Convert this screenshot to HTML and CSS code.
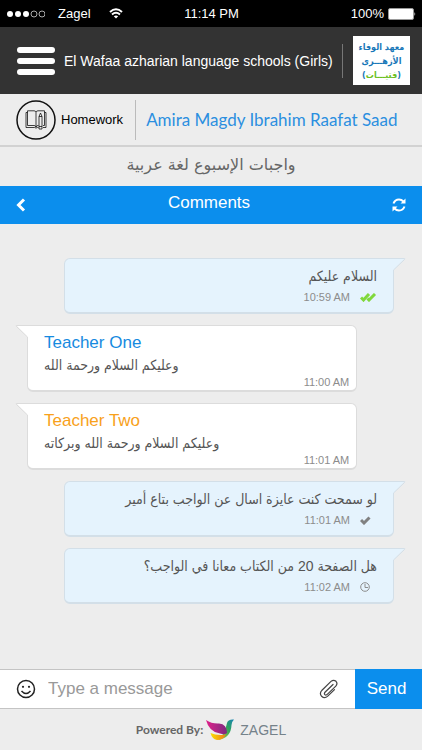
FILE: index.html
```html
<!DOCTYPE html>
<html lang="en">
<head>
  <meta charset="UTF-8" />
  <meta name="viewport" content="width=device-width, initial-scale=1.0"/>
  <title>Homework Comments</title>
  <link rel="stylesheet" href="styles.css">
</head>
<body>

<div class="status-bar">
  <div class="carrier">
    <svg class="signal" width="38" height="8" viewBox="0 0 38 8">
      <g fill="#fff"><circle cx="3" cy="4" r="3"/><circle cx="11" cy="4" r="3"/><circle cx="19" cy="4" r="3"/></g>
      <g fill="none" stroke="#aaa"><circle cx="27" cy="4" r="3"/><circle cx="35" cy="4" r="3"/></g>
    </svg>
    <span>Zagel</span>
    <svg class="wifi" width="14" height="11" viewBox="0 0 14 11" fill="none" stroke="#fff" stroke-width="2">
      <path d="M1 4 Q7 -1.5 13 4"/>
      <path d="M3 6.5 Q7 3 11 6.5"/>
      <path d="M7 10.5 L4.8 8.3 Q7 6.5 9.2 8.3 Z" fill="#fff" stroke="none"/>
    </svg>
  </div>
  <span>11:14 PM</span>
  <div class="battery">
    <span>100%</span>
    <svg width="28" height="12" viewBox="0 0 28 12">
      <rect x="0.5" y="0.5" width="25" height="11" rx="1.5" fill="#fff" stroke="#999"/>
      <path d="M26.5 4 Q28 6 26.5 8 Z" fill="#fff"/>
    </svg>
  </div>
</div>

<header class="header">
  <button class="menu-btn" type="button" aria-label="Menu">
    <span></span><span></span><span></span>
  </button>
  <h1>El Wafaa azharian language schools (Girls)</h1>
  <div class="school-logo" lang="ar" dir="rtl">
    <span>معهد الوفاء</span>
    <span>الأزهـــرى</span>
    <span>(<b>فتيـــات</b>)</span>
  </div>
</header>

<div class="student">
  <div class="section">
    <svg width="40" height="40" viewBox="0 0 40 40" fill="none" stroke="#111">
      <circle cx="20" cy="20" r="19" stroke-width="1.5"/>
      <g stroke-width="0.8">
        <path d="M20 12Q19.500 10.800 18 10.800H11.500V25.500H18Q19.500 25.500 20 27Q20.500 25.500 22 25.500H22.500M20 12Q20.500 10.800 22 10.800H28.500V25.500H27M20 12V27"/>
        <path d="M11.500 12.500H10V27.500H18.500Q20 27.500 20 28.300Q20 27.500 21.500 27.500H22.500M28.500 12.500H30V27.500H27"/>
        <path d="M23 16.500L24.500 13 26 16.500V29H23zM23 16.500H26M23 26.500H26" fill="#ededed"/>
      </g>
    </svg>
    <span>Homework</span>
  </div>
  <a class="student-name" href="#">Amira Magdy Ibrahim Raafat Saad</a>
</div>

<h2 class="subject" lang="ar" dir="rtl">واجبات الإسبوع لغة عربية</h2>

<div class="comments-bar">
  <button type="button" aria-label="Back">
    <svg width="10" height="14" viewBox="0 0 10 14" fill="none" stroke="#fff" stroke-width="3"><path d="M8 1.500L2.500 7 8 12.500"/></svg>
  </button>
  <h2>Comments</h2>
  <button type="button" aria-label="Refresh">
    <svg width="14" height="14" viewBox="0 0 14 14" fill="none" stroke="#fff" stroke-width="2">
      <path d="M1.500 5.500Q3 1.500 7 1.500 9.500 1.500 11.500 3.500 M12.500 8.500Q11 12.500 7 12.500 4.500 12.500 2.500 10.500"/>
      <path d="M13.500 0.500v5h-5z M0.500 13.500v-5h5z" fill="#fff" stroke="none"/>
    </svg>
  </button>
</div>

<main class="chat">
  <div class="message sent">
    <svg class="tail" width="14" height="14" viewBox="0 0 14 14"><path d="M0 0.500H12.500L1.500 12V14H0z" class="tail-fill"/><path d="M0 0.500H12.500Q13.500 0.500 12.500 1.500L1.500 12V14" class="tail-line"/></svg>
    <p lang="ar" dir="rtl">السلام عليكم</p>
    <div class="meta">
      <time>10:59 AM</time>
      <svg width="17" height="9" viewBox="0 0 17 9" fill="none" stroke="#80d83c" stroke-width="3"><path d="M1 4.500L3.500 7 9 1 M7.500 5.500L9 7 15 1"/></svg>
    </div>
  </div>

  <div class="message received">
    <svg class="tail" width="14" height="14" viewBox="0 0 14 14"><path d="M14 0.500H1.500L12.500 12V14H14z" class="tail-fill"/><path d="M14 0.500H1.500Q0.500 0.500 1.500 1.500L12.500 12V14" class="tail-line"/></svg>
    <h3 class="teacher-one">Teacher One</h3>
    <p lang="ar" dir="rtl">وعليكم السلام ورحمة الله</p>
    <time>11:00 AM</time>
  </div>

  <div class="message received">
    <svg class="tail" width="14" height="14" viewBox="0 0 14 14"><path d="M14 0.500H1.500L12.500 12V14H14z" class="tail-fill"/><path d="M14 0.500H1.500Q0.500 0.500 1.500 1.500L12.500 12V14" class="tail-line"/></svg>
    <h3 class="teacher-two">Teacher Two</h3>
    <p lang="ar" dir="rtl">وعليكم السلام ورحمة الله وبركاته</p>
    <time>11:01 AM</time>
  </div>

  <div class="message sent">
    <svg class="tail" width="14" height="14" viewBox="0 0 14 14"><path d="M0 0.500H12.500L1.500 12V14H0z" class="tail-fill"/><path d="M0 0.500H12.500Q13.500 0.500 12.500 1.500L1.500 12V14" class="tail-line"/></svg>
    <p lang="ar" dir="rtl">لو سمحت كنت عايزة اسال عن الواجب بتاع أمير</p>
    <div class="meta">
      <time>11:01 AM</time>
      <svg width="17" height="9" viewBox="0 0 17 9" fill="none" stroke="#808080" stroke-width="3"><path d="M1 4L4 7 9.500 1.500"/></svg>
    </div>
  </div>

  <div class="message sent">
    <svg class="tail" width="14" height="14" viewBox="0 0 14 14"><path d="M0 0.500H12.500L1.500 12V14H0z" class="tail-fill"/><path d="M0 0.500H12.500Q13.500 0.500 12.500 1.500L1.500 12V14" class="tail-line"/></svg>
    <p lang="ar" dir="rtl">هل الصفحة 20 من الكتاب معانا في الواجب؟</p>
    <div class="meta">
      <time>11:02 AM</time>
      <svg width="17" height="10" viewBox="0 0 17 10" fill="none" stroke="#8c8c8c"><circle cx="5" cy="5" r="4.300"/><path d="M5 2v3.500h3"/></svg>
    </div>
  </div>
</main>

<form class="compose">
  <button class="icon-btn" type="button" aria-label="Emoji">
    <svg width="20" height="20" viewBox="0 0 20 20" fill="none" stroke="#222" stroke-width="1.500">
      <circle cx="10" cy="10" r="8.500"/>
      <path d="M5.500 12Q10 17 14.500 12"/>
      <circle cx="7" cy="7.800" r="1.100" fill="#222" stroke="none"/><circle cx="13" cy="7.800" r="1.100" fill="#222" stroke="none"/>
    </svg>
  </button>
  <input type="text" name="message" placeholder="Type a message" aria-label="Type a message">
  <button class="icon-btn" type="button" aria-label="Attach file">
    <svg width="20" height="20" viewBox="0 0 20 20" fill="none" stroke="#444" stroke-width="1.200" stroke-linecap="round">
      <path d="M14 5.500L6 13.200Q4.800 15 6 15.800 7.200 16.500 8.500 15.200L16.800 7.200Q19 4.500 17 2.300 14.600 0.200 12 2.400L3 11.200Q0 14.500 2.600 17.300 5.500 20 8.500 17.400L15.500 10.600"/>
    </svg>
  </button>
  <button class="send-btn" type="submit">Send</button>
</form>

<footer class="footer">
  <span>Powered By:</span>
  <svg width="28" height="22" viewBox="0 0 28 22">
    <defs>
      <linearGradient id="wing"><stop offset="0" stop-color="#e0218a"/><stop offset="1" stop-color="#7d2a80"/></linearGradient>
      <linearGradient id="belly"><stop offset="0" stop-color="#fbe000"/><stop offset="1" stop-color="#f07a1c"/></linearGradient>
      <linearGradient id="body" x1="0" y1="1" x2="1" y2="0"><stop offset="0" stop-color="#b5d334"/><stop offset="0.6" stop-color="#2fa35c"/><stop offset="1" stop-color="#1583b8"/></linearGradient>
    </defs>
    <path d="M21 4Q22 0 28 0.500 25.500 3 25.500 6 25 19 12 21 19 15 21 4z" fill="url(#body)"/>
    <path d="M0 1Q6 5 13 4.500 21 5 21 14 19 16 14 14.500 3 13 0 1z" fill="url(#wing)"/>
    <path d="M4.500 14Q11 17 20 15.500 17 21 11 21 6 20 4.500 14z" fill="url(#belly)"/>
  </svg>
  <span class="brand">ZAGEL</span>
</footer>

</body>
</html>
```
FILE: styles.css
```css
* {
  box-sizing: border-box;
}

body {
  margin: 0;
  min-height: 100vh;
  display: flex;
  flex-direction: column;
  font-family: "Liberation Sans", Arial, sans-serif;
  background-color: #ededed;
}

h1, h2, h3, p {
  margin: 0;
  font-weight: normal;
}

button {
  display: flex;
  align-items: center;
  justify-content: center;
  padding: 0;
  border: none;
  background: none;
  font-family: inherit;
  cursor: pointer;
}

svg {
  flex-shrink: 0;
}

/* phone status bar */
.status-bar {
  display: grid;
  grid-template-columns: 1fr auto 1fr;
  align-items: center;
  height: 27px;
  padding: 0 6px 0 7px;
  background-color: #000;
  color: #fff;
  font-size: 13px;
}

.carrier, .battery {
  display: flex;
  align-items: center;
}

.signal {
  margin-right: 13px;
}

.wifi {
  margin-left: 18px;
}

.battery {
  justify-content: flex-end;
  gap: 4px;
}

/* header */
.header {
  display: flex;
  align-items: center;
  height: 67px;
  padding: 0 12px 0 17px;
  background-color: #333;
  color: #fff;
}

.menu-btn {
  flex-direction: column;
  gap: 5px;
  margin-right: 9px;
}

.menu-btn span {
  width: 38px;
  height: 6px;
  border-radius: 3px;
  background-color: #fff;
}

.header h1 {
  flex: 1;
  font-size: 14px;
  line-height: 34px;
  border-right: 1px solid #777;
  white-space: nowrap;
}

.school-logo {
  display: flex;
  flex-direction: column;
  justify-content: center;
  width: 57px;
  height: 49px;
  margin-left: 10px;
  background-color: #fff;
  color: #1877b8;
  font-family: "DejaVu Sans Condensed", "DejaVu Sans", sans-serif;
  font-size: 9px;
  font-weight: bold;
  line-height: 14px;
  text-align: center;
  white-space: nowrap;
}

.school-logo b {
  color: #6cbf1f;
}

/* student row */
.student {
  display: flex;
  align-items: center;
  height: 53px;
  padding: 0 16px;
  border-bottom: 2px solid #d2d2d2;
}

.section {
  display: flex;
  align-items: center;
  gap: 5px;
  height: 40px;
  padding-right: 12px;
  border-right: 1px solid #bbb;
  font-size: 13px;
}

.student-name {
  margin-left: 10px;
  color: #2b8fe0;
  font-family: Lato, sans-serif;
  font-size: 17px;
  text-decoration: none;
  white-space: nowrap;
}

.subject {
  height: 39px;
  color: #666;
  font-family: "DejaVu Sans", sans-serif;
  font-size: 16px;
  line-height: 36px;
  text-align: center;
}

/* comments */
.comments-bar {
  display: flex;
  align-items: center;
  justify-content: space-between;
  height: 38px;
  padding: 0 16px;
  background-color: #0b8eed;
  color: #fff;
}

.comments-bar h2 {
  font-size: 17px;
  line-height: 34px;
  align-self: flex-start;
}

.chat {
  flex: 1;
  display: flex;
  flex-direction: column;
  gap: 11px;
  padding: 34px 28px 34px 27px;
}

.message {
  position: relative;
  width: 90%;
  border: 1px solid #dcdcdc;
  border-bottom-width: 2px;
  border-radius: 6px;
  color: #555;
}

.message p {
  font-family: "Liberation Sans", "DejaVu Sans Condensed", "DejaVu Sans", sans-serif;
  font-size: 14px;
  line-height: 22px;
}

.message time {
  color: #8c8c8c;
  font-size: 11px;
  line-height: 16px;
}

.sent {
  align-self: flex-end;
  padding: 6px 16px 6px 12px;
  border-color: #d3dfe8;
  border-top-right-radius: 0;
  background-color: #e5f3fd;
}

.received {
  display: flex;
  flex-direction: column;
  padding: 6px 7px 0 16px;
  border-top-left-radius: 0;
  background-color: #fff;
}

.received h3 {
  font-size: 17px;
  line-height: 22px;
}

.received p {
  align-self: flex-start;
}

.received time {
  align-self: flex-end;
  margin-top: -2px;
}

.teacher-one {
  color: #168ae0;
}

.teacher-two {
  color: #f8a11b;
}

.meta {
  display: flex;
  align-items: center;
  justify-content: flex-end;
  gap: 10px;
  height: 18px;
  margin-top: 1px;
}

.tail {
  position: absolute;
  top: -1px;
}

.sent .tail {
  right: -13px;
}

.received .tail {
  left: -13px;
}

.tail-line {
  fill: none;
  stroke: #dcdcdc;
}

.sent .tail-line {
  stroke: #d3dfe8;
}

.tail-fill {
  fill: #fff;
}

.sent .tail-fill {
  fill: #e5f3fd;
}

/* message box */
.compose {
  display: flex;
  height: 40px;
  padding-left: 16px;
  border-top: 1px solid #c4c4c4;
  border-bottom: 1px solid #c4c4c4;
  background-color: #fff;
}

.compose input {
  flex: 1;
  min-width: 0;
  padding: 0 12px;
  border: none;
  outline: none;
  font-family: inherit;
  font-size: 17px;
}

.compose input::placeholder {
  color: #999;
}

.send-btn {
  width: 67px;
  margin: -1px 0 -1px 16px;
  padding-right: 4px;
  background-color: #0b8eed;
  color: #fff;
  font-size: 17px;
}

.footer {
  display: flex;
  align-items: center;
  justify-content: center;
  gap: 3px;
  height: 41px;
  color: #666;
  font-family: Lato, sans-serif;
  font-size: 12px;
  font-weight: bold;
}

.brand {
  margin-left: 3px;
  color: #75828a;
  font-family: "Liberation Sans", Arial, sans-serif;
  font-size: 14px;
  font-weight: normal;
}
```
